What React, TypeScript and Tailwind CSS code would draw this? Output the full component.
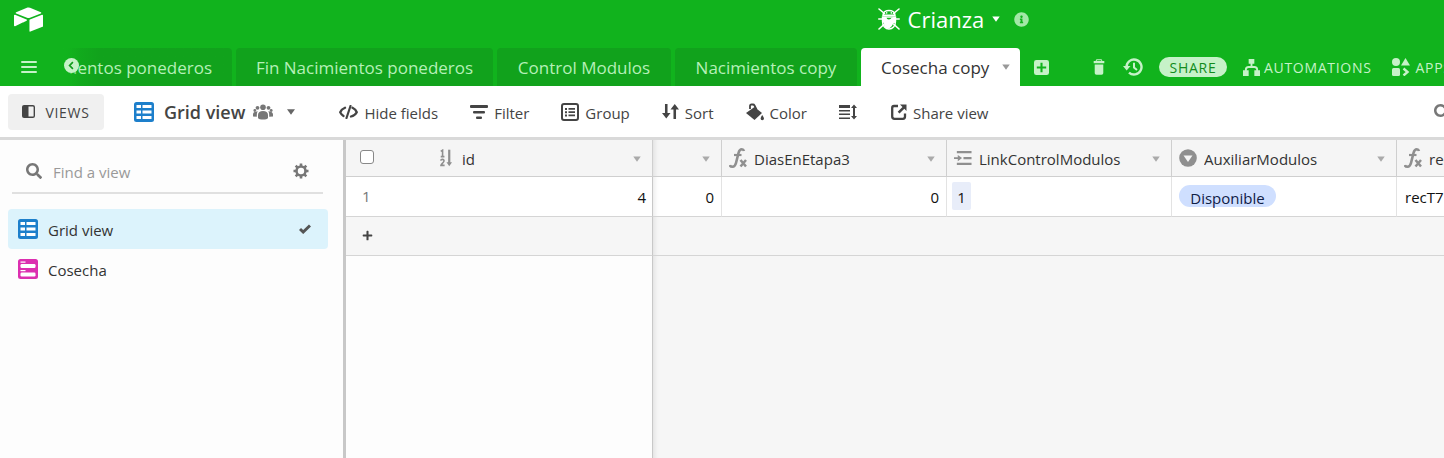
import React from 'react';
import { SiAirtable } from 'react-icons/si';
import { FaInfoCircle, FaPlus, FaSearch } from 'react-icons/fa';

interface IIconProps {
  className?: string;
}

interface ITabProps {
  label: string;
  width: string;
}

interface IColumnHeadProps {
  label?: string;
  icon?: React.ReactNode;
  className?: string;
}

interface IToolProps {
  label?: string;
  title?: string;
  icon: React.ReactNode;
  className?: string;
}

function Caret({ className }: IIconProps) {
  return (
    <svg viewBox="0 0 10 8" className={className} fill="currentColor" aria-hidden="true">
      <path d="M0 0.5h10L5 7.5z" />
    </svg>
  );
}

function BugIcon({ className }: IIconProps) {
  return (
    <svg viewBox="0 0 22 22" className={className} fill="none" stroke="currentColor" strokeWidth="1.6" strokeLinecap="round" aria-hidden="true">
      <path d="M1 1l5.500 4.500M21 1l-5.500 4.500M0.800 11h4M21.200 11h-4M1 21l5.500-5M21 21l-5.500-5" />
      <path d="M5 7.200C5 0.800 17 0.800 17 7.200z" strokeWidth="1.500" />
      <path d="M8.700 4.800v0.100M13.300 4.800v0.100" strokeWidth="1.500" />
      <path d="M4.500 9h13v4.500c0 4.500-3 7.500-6.500 7.500s-6.500-3-6.500-7.500z" strokeWidth="1.400" />
      <path d="M4.500 9h4c0 2.500 2.500 3 4 2 1-1.500 2-2 5-2v4.500c0 1-0.500 1.500-1.500 1.500-1 0-1 1-1.500 2-0.800 1.500-2 2.500-3.500 3.500-2.500 0-4-1-5-2.500 1-2 0-3-1.500-4z" fill="currentColor" stroke="none" />
    </svg>
  );
}

function GridIcon({ className }: IIconProps) {
  return (
    <svg viewBox="0 0 20 20" className={className} aria-hidden="true">
      <rect width="20" height="20" rx="2.500" fill="currentColor" />
      <path fill="#fff" d="M2.500 3h4.500v3h-4.500zM8.500 3h9v3h-9zM2.500 8.500h4.500v3h-4.500zM8.500 8.500h9v3h-9zM2.500 14h4.500v3h-4.500zM8.500 14h9v3h-9z" />
    </svg>
  );
}

function FormIcon({ className }: IIconProps) {
  return (
    <svg viewBox="0 0 20 20" className={className} aria-hidden="true">
      <rect width="20" height="20" rx="2.500" fill="currentColor" />
      <g fill="#fff">
        <rect x="2.500" y="2.500" width="5" height="1.200" />
        <rect x="2.500" y="5" width="15" height="4" rx="1.200" />
        <rect x="2.500" y="11" width="5" height="1.200" />
        <rect x="2.500" y="13.500" width="15" height="4" rx="1.200" />
      </g>
    </svg>
  );
}

function PeopleIcon({ className }: IIconProps) {
  return (
    <svg viewBox="0 0 20 16" className={className} fill="currentColor" aria-hidden="true">
      <circle cx="10" cy="3.200" r="2.800" />
      <circle cx="4.500" cy="3.800" r="1.900" />
      <circle cx="15.500" cy="3.800" r="1.900" />
      <circle cx="1.800" cy="6.500" r="1.400" />
      <circle cx="18.200" cy="6.500" r="1.400" />
      <path d="M5 14v-3c0-2.500 2-4 5-4s5 1.500 5 4v3c-1 2-9 2-10 0z" />
      <path d="M0 12.500V10.500C0 8.500 1.500 7.500 4.800 7.200 3.800 8.500 3.800 10 3.800 12.800zM20 12.500V10.500C20 8.500 18.500 7.500 15.200 7.200 16.200 8.500 16.200 10 16.200 12.800z" />
    </svg>
  );
}

function CodeIcon({ className }: IIconProps) {
  return (
    <svg viewBox="0 0 19 14" className={className} fill="none" stroke="currentColor" strokeLinecap="round" strokeLinejoin="round" aria-hidden="true">
      <path d="M6 2.800Q2.500 4.300 1.200 7.200 2.500 9.800 4.500 11M13.500 2.800Q16.500 4.300 17.800 7.200 16 10.500 12 11.500" strokeWidth="2.300" />
      <path d="M11.500 1L7.500 13" strokeWidth="2.200" />
    </svg>
  );
}

function HistoryIcon({ className }: IIconProps) {
  return (
    <svg viewBox="0 0 20 18" className={className} fill="none" stroke="currentColor" aria-hidden="true">
      <path d="M3.500 9a7.500 7.500 0 1 1 2.500 5.600" strokeWidth="2.400" />
      <path d="M0 8h7.500L3.700 12.500z" fill="currentColor" stroke="none" />
      <path d="M11 4.800v4.700l3 2.500" strokeWidth="2" />
    </svg>
  );
}

function GearIcon({ className }: IIconProps) {
  return (
    <svg viewBox="0 0 16 16" className={className} fill="none" stroke="currentColor" aria-hidden="true">
      <circle cx="8" cy="8" r="4.500" strokeWidth="2.600" />
      <path
        d="M8 0.500v3M8 12.500v3M0.500 8h3M12.500 8h3M2.700 2.700l2.100 2.100M11.200 11.200l2.100 2.100M2.700 13.300l2.100-2.100M11.200 4.800l2.100-2.100"
        strokeWidth="2.600"
      />
    </svg>
  );
}

function CheckIcon({ className }: IIconProps) {
  return (
    <svg viewBox="0 0 12 10" className={className} fill="none" stroke="currentColor" strokeWidth="3" aria-hidden="true">
      <path d="M1 5l3.200 3L11 1.500" />
    </svg>
  );
}

function SidebarIcon({ className }: IIconProps) {
  return (
    <svg viewBox="0 0 14 14" className={className} aria-hidden="true">
      <rect x="0.750" y="0.750" width="12.500" height="12.500" rx="1.500" fill="none" stroke="currentColor" strokeWidth="1.500" />
      <path d="M1 1h6v12H1z" fill="currentColor" />
    </svg>
  );
}

function MenuIcon({ className }: IIconProps) {
  return (
    <svg viewBox="0 0 16 14" className={className} fill="currentColor" aria-hidden="true">
      <rect y="1" width="16" height="2" rx="1" />
      <rect y="6" width="16" height="2" rx="1" />
      <rect y="11" width="16" height="2" rx="1" />
    </svg>
  );
}

function TrashIcon({ className }: IIconProps) {
  return (
    <svg viewBox="0 0 14 18" className={className} fill="currentColor" aria-hidden="true">
      <path d="M4 0h6l1 2h2.200v2.500H0.800V2H3zM4.600 1.200L4.200 2h5.600l-0.400-0.800z" fillRule="evenodd" />
      <path d="M2 6h10v10a2 2 0 0 1-2 2H4a2 2 0 0 1-2-2z" />
    </svg>
  );
}

function AddTableIcon({ className }: IIconProps) {
  return (
    <svg viewBox="0 0 16 16" className={className} aria-hidden="true">
      <rect width="16" height="16" rx="2.500" fill="currentColor" />
      <path d="M8 3v10M3 8h10" stroke="#11b31d" strokeWidth="2.200" />
    </svg>
  );
}

function BackIcon({ className }: IIconProps) {
  return (
    <svg viewBox="0 0 16 16" className={className} aria-hidden="true">
      <circle cx="8" cy="8" r="8" fill="currentColor" />
      <path d="M9.500 4.500L6 8l3.500 3.500" stroke="#119c1c" strokeWidth="1.800" fill="none" />
    </svg>
  );
}

function AutomationsIcon({ className }: IIconProps) {
  return (
    <svg viewBox="0 0 18 18" className={className} fill="currentColor" aria-hidden="true">
      <path d="M6 0h6v5H6zM0 12h6v6H0zM12 12h6v6h-6z" />
      <path d="M9 4v4.500M3 13v-1.500q0-3 3-3h6q3 0 3 3V13" fill="none" stroke="currentColor" strokeWidth="2" />
    </svg>
  );
}

function AppsIcon({ className }: IIconProps) {
  return (
    <svg viewBox="0 0 18 18" className={className} fill="currentColor" aria-hidden="true">
      <circle cx="4" cy="4" r="4" />
      <path d="M13.500 0L18 7.500H9z" />
      <rect y="10" width="8" height="8" rx="1.500" />
      <path d="M11.500 10.500L15.500 14l-4 3.500" fill="none" stroke="currentColor" strokeWidth="2.400" />
    </svg>
  );
}

function FilterIcon({ className }: IIconProps) {
  return (
    <svg viewBox="0 0 18 14" className={className} fill="currentColor" aria-hidden="true">
      <rect y="0" width="18" height="3" rx="1" />
      <rect x="3" y="6" width="12" height="2.500" rx="1" />
      <rect x="6" y="11.500" width="6" height="2.500" rx="1" />
    </svg>
  );
}

function GroupIcon({ className }: IIconProps) {
  return (
    <svg viewBox="0 0 18 18" className={className} fill="currentColor" aria-hidden="true">
      <rect x="1" y="1" width="16" height="16" rx="2" fill="none" stroke="currentColor" strokeWidth="2" />
      <path d="M4 5h2v2H4zM7.500 5H14v1.700H7.500zM4 8.200h2v2H4zM7.500 8.300H14V10H7.500zM4 11.500h2v2H4zM7.500 11.600H14v1.700H7.500z" />
    </svg>
  );
}

function SortIcon({ className }: IIconProps) {
  return (
    <svg viewBox="0 0 16 16" className={className} fill="currentColor" aria-hidden="true">
      <path d="M2.800 1h2.400v8.500H8L4 14.500 0 9.500h2.800zM10.800 15h2.400V6H16L12 1 8 6h2.800z" />
    </svg>
  );
}

function PaintIcon({ className }: IIconProps) {
  return (
    <svg viewBox="0 0 18 17" className={className} fill="currentColor" aria-hidden="true">
      <path d="M8.500 3.500l7.500 6L8.500 16.500 0 9.500z" />
      <path d="M4 5.500V2.500Q4 1 5.500 1h1.500q1 0 1.500 1l2 4" fill="none" stroke="currentColor" strokeWidth="1.800" />
      <path d="M16.200 11.500c1 1.600 1.800 2.800 1.800 3.600a1.700 1.700 0 0 1-3.400 0c0-0.800 0.700-2 1.600-3.600z" />
    </svg>
  );
}

function RowHeightIcon({ className }: IIconProps) {
  return (
    <svg viewBox="0 0 18 16" className={className} fill="currentColor" aria-hidden="true">
      <path d="M0 1h11v3H0zM0 6h11v1.500H0zM0 9.500h11V11H0zM0 13.500h11V15H0z" />
      <path d="M15 0.500l3 3.500h-2v8h2l-3 3.500-3-3.500h2V4h-2z" />
    </svg>
  );
}

function ShareIcon({ className }: IIconProps) {
  return (
    <svg viewBox="0 0 16 16" className={className} aria-hidden="true">
      <path d="M7 2H3Q1.200 2 1.200 4v8.500Q1.200 14.800 3.500 14.800h8.500Q14 14.800 14 12.500V9.500" fill="none" stroke="currentColor" strokeWidth="2.300" />
      <path d="M9 0.500h6.500V7l-2.200-2.200-4.800 4.800-1.800-1.800 4.800-4.800z" fill="currentColor" />
    </svg>
  );
}

function AutoNumberIcon({ className }: IIconProps) {
  return (
    <svg viewBox="0 0 13 19" className={className} fill="none" stroke="currentColor" aria-hidden="true">
      <path d="M0.800 2.300L2.800 1v7.300M0.800 8h4" strokeWidth="1.700" />
      <path d="M0.800 12.300C1.200 10.500 4.600 10.500 4.300 12.800 4.200 14.500 1 16 1 17.500h4" strokeWidth="1.700" />
      <path d="M10 0.500v15" strokeWidth="2.400" />
      <path d="M7 14h6l-3 4.500z" fill="currentColor" stroke="none" />
    </svg>
  );
}

function FormulaIcon({ className }: IIconProps) {
  return (
    <svg viewBox="0 0 18 20" className={className} fill="none" stroke="currentColor" aria-hidden="true">
      <path d="M15 3Q14.500 1.300 12.800 1.300 10.500 1.300 9.500 5L7 15Q6 18.700 3.500 18.700 1.200 18.700 0.800 17" strokeWidth="2.600" />
      <path d="M5 7h7.500" strokeWidth="2.200" />
      <path d="M11.500 12l5.500 6.500M17 12l-5.500 6.500" strokeWidth="2.500" />
    </svg>
  );
}

function CountIcon({ className }: IIconProps) {
  return (
    <svg viewBox="0 0 19 16" className={className} fill="currentColor" aria-hidden="true">
      <path d="M3 0.500h15.500v2.500H3zM10 7h8.500v2.200H10zM3 13h15.500v2.500H3zM0 7.200h4V4.800L8.500 8 4 11.300V9H0z" />
    </svg>
  );
}

function SelectIcon({ className }: IIconProps) {
  return (
    <svg viewBox="0 0 18 18" className={className} aria-hidden="true">
      <circle cx="9" cy="9" r="8.800" fill="currentColor" />
      <path d="M4.500 6.500h9L9 13z" fill="#f5f5f5" />
    </svg>
  );
}

function Tab({ label, width }: ITabProps) {
  return (
    <button className={`h-full shrink-0 whitespace-nowrap rounded-t-sm bg-[#11a21c] pt-0.5 text-[17px] text-[#b5f0b8] ${width}`}>
      {label}
    </button>
  );
}

function Tool({ label, title, icon, className }: IToolProps) {
  return (
    <button aria-label={label || title} className={`flex shrink-0 items-center gap-1.5 whitespace-nowrap ${className}`}>
      {icon}
      {label && <span className="pt-1">{label}</span>}
    </button>
  );
}

function ColumnHead({ label, icon, className }: IColumnHeadProps) {
  return (
    <th className={`border-r border-b border-[#cfcfcf] bg-[#f5f5f5] p-0 font-normal ${className}`}>
      <div className="flex items-center pr-2.5 pl-1.5">
        <span className="flex w-5 shrink-0 justify-center text-[#8f8f8f]">{icon}</span>
        <span className="ml-1.5 flex-1 truncate pt-0.5 text-left">{label}</span>
        <Caret className="mt-0.5 h-1.5 w-2.5 text-[#aaaaaa]" />
      </div>
    </th>
  );
}

function Header() {
  return (
    <header className="bg-[#11b31d] text-[#c6f2c8]">
      <div className="flex h-12 items-center px-3.5 pb-2.5">
        <a href="#home" aria-label="Home" className="flex-2">
          <SiAirtable className="size-[29px] text-white" />
        </a>
        <button className="ml-8 flex items-center text-[22px] text-white">
          <BugIcon className="mr-2 size-[22px]" />
          Crianza
          <Caret className="ml-2 h-1.5 w-2" />
        </button>
        <div className="flex flex-1 items-center pl-3.5">
          <button aria-label="Base info">
            <FaInfoCircle className="size-[15px] text-[#a3e8a7]" />
          </button>
        </div>
      </div>
      <div className="flex h-[38px] items-center overflow-hidden">
        <button aria-label="Menu" className="w-14 shrink-0 pl-[21px]">
          <MenuIcon className="h-3.5 w-4" />
        </button>
        <nav className="flex h-full shrink-0 gap-1">
          <div className="relative flex h-full w-44 justify-end overflow-hidden rounded-t-sm bg-linear-to-r from-[#11b31d] to-[#11a21c] to-25%">
            <button className="whitespace-nowrap pt-0.5 pr-5 text-[17px] text-[#b5f0b8]">Nacimientos ponederos</button>
            <span className="absolute inset-y-0 left-0 w-6 bg-linear-to-r from-[#11b31d] from-40% to-transparent" />
            <button aria-label="Previous tables" className="absolute top-2.5 left-2">
              <BackIcon className="size-[15px] text-[#c6f2c8]" />
            </button>
          </div>
          <Tab label="Fin Nacimientos ponederos" width="w-[257px]" />
          <Tab label="Control Modulos" width="w-[174px]" />
          <Tab label="Nacimientos copy" width="w-[182px]" />
          <button className="flex h-full w-[159px] items-center justify-between rounded-t-sm bg-white pr-2.5 pl-5 text-[17px] whitespace-nowrap text-[#333333]">
            <span className="pt-0.5">Cosecha copy</span>
            <Caret className="h-1.5 w-2 text-[#999999]" />
          </button>
        </nav>
        <button aria-label="Add table" className="ml-3.5 shrink-0">
          <AddTableIcon className="size-[15px]" />
        </button>
        <div className="ml-11 flex shrink-0 items-center whitespace-nowrap text-sm tracking-wider">
          <button aria-label="Trash">
            <TrashIcon className="h-[18px] w-3" />
          </button>
          <button aria-label="History" className="ml-[18px]">
            <HistoryIcon className="h-[18px] w-5" />
          </button>
          <button className="ml-4 h-5 w-[68px] rounded-full bg-[#c6f2c8] pt-px leading-5 text-[#128c1d]">SHARE</button>
          <button className="ml-4 flex items-center gap-1">
            <AutomationsIcon className="size-[17px]" />
            <span className="pt-0.5">AUTOMATIONS</span>
          </button>
          <button className="ml-5 flex items-center gap-1.5">
            <AppsIcon className="size-[18px]" />
            <span className="pt-0.5">APPS</span>
          </button>
        </div>
      </div>
    </header>
  );
}

function Toolbar() {
  return (
    <div className="flex h-[54px] items-center overflow-hidden border-b-3 border-[#d9d9d9] bg-white pl-2 text-[15px] text-[#444444]">
      <button className="flex h-9 w-24 shrink-0 items-center justify-center gap-2.5 rounded-sm bg-[#f0f0f0] text-sm tracking-wider">
        <SidebarIcon className="size-[13px]" />
        <span className="pt-0.5">VIEWS</span>
      </button>
      <button className="ml-[30px] flex shrink-0 items-center whitespace-nowrap text-[18px] font-semibold">
        <GridIcon className="mr-2.5 size-5 text-[#1d7fcb]" />
        <span className="pt-0.5">Grid view</span>
        <PeopleIcon className="ml-2 h-4 w-5 text-[#777777]" />
        <Caret className="ml-3.5 h-2 w-2 text-[#666666]" />
      </button>
      <Tool label="Hide fields" icon={<CodeIcon className="h-3.5 w-[19px]" />} className="ml-11" />
      <Tool label="Filter" icon={<FilterIcon className="h-3.5 w-[18px]" />} className="ml-8" />
      <Tool label="Group" icon={<GroupIcon className="size-[18px]" />} className="ml-8" />
      <Tool label="Sort" icon={<SortIcon className="size-[17px]" />} className="ml-8" />
      <Tool label="Color" icon={<PaintIcon className="size-[18px]" />} className="ml-8" />
      <Tool title="Row height" icon={<RowHeightIcon className="h-4 w-[18px]" />} className="ml-8" />
      <Tool label="Share view" icon={<ShareIcon className="size-4" />} className="ml-[34px]" />
      <button aria-label="Search" className="mr-[-6px] ml-auto shrink-0">
        <FaSearch className="size-4 text-[#777777]" />
      </button>
    </div>
  );
}

function Sidebar() {
  return (
    <aside className="w-[346px] shrink-0 border-r-3 border-[#c8c8c8] bg-[#fdfdfd] text-[15px] text-[#333333]">
      <div className="mr-5 ml-3 flex h-[54px] items-center border-b-2 border-[#e0e0e0] pt-2.5 pr-3.5 pl-3.5">
        <FaSearch className="size-4 text-[#777777]" />
        <input
          type="text"
          aria-label="Find a view"
          placeholder="Find a view"
          className="ml-[11px] w-0 flex-1 bg-transparent pt-0.5 outline-none placeholder:text-[#999999]"
        />
        <button aria-label="View settings">
          <GearIcon className="size-4 text-[#777777]" />
        </button>
      </div>
      <ul className="mt-[15px] mr-[15px] ml-2">
        <li>
          <button className="flex h-10 w-full items-center gap-2.5 rounded-sm bg-[#dcf3fc] pr-[17px] pl-2.5">
            <GridIcon className="size-5 text-[#1d7fcb]" />
            <span className="flex-1 pt-0.5 text-left">Grid view</span>
            <CheckIcon className="h-2.5 w-3 text-[#555555]" />
          </button>
        </li>
        <li>
          <button className="flex h-10 w-full items-center gap-2.5 pr-4 pl-2.5">
            <FormIcon className="size-5 text-[#dc2fb0]" />
            <span className="flex-1 pt-0.5 text-left">Cosecha</span>
          </button>
        </li>
      </ul>
    </aside>
  );
}

function Grid() {
  const shadow = 'shadow-[inset_6px_0_4px_-4px_rgba(0,0,0,0.08)]';

  return (
    <main className="flex min-w-0 flex-1 flex-col overflow-hidden text-[15px] text-[#333333]">
      <table className="w-[1207px] table-fixed border-separate border-spacing-0">
        <colgroup>
          <col className="w-[84px]" />
          <col className="w-[223px]" />
          <col className="w-[69px]" />
          <col className="w-[225px]" />
          <col className="w-[225px]" />
          <col className="w-[225px]" />
          <col className="w-[156px]" />
        </colgroup>
        <thead>
          <tr className="h-[37px]">
            <th className="border-b border-[#cfcfcf] bg-[#f5f5f5] p-0 pb-0.5 pl-3.5 text-left">
              <input
                type="checkbox"
                aria-label="Select all rows"
                className="block size-3.5 appearance-none rounded-[3px] border border-[#888888] bg-white"
              />
            </th>
            <ColumnHead label="id" icon={<AutoNumberIcon className="h-[18px] w-3" />} />
            <ColumnHead className={shadow} />
            <ColumnHead label="DiasEnEtapa3" icon={<FormulaIcon className="h-5 w-[18px]" />} />
            <ColumnHead label="LinkControlModulos" icon={<CountIcon className="h-4 w-[18px]" />} />
            <ColumnHead label="AuxiliarModulos" icon={<SelectIcon className="size-[18px]" />} />
            <ColumnHead label="recordId" icon={<FormulaIcon className="h-5 w-[18px]" />} />
          </tr>
        </thead>
        <tbody>
          <tr className="h-10 bg-white text-[#111111]">
            <td className="border-b border-[#d5d5d5] p-0 pl-4 text-[#777777]">1</td>
            <td className="border-r border-b border-[#c8c8c8] border-b-[#d5d5d5] p-0 pt-0.5 pr-1.5 text-right">4</td>
            <td className={`border-r border-b border-[#e3e3e3] border-b-[#d5d5d5] p-0 pt-0.5 pr-[7px] text-right ${shadow}`}>0</td>
            <td className="border-r border-b border-[#e3e3e3] border-b-[#d5d5d5] p-0 pt-0.5 pr-[7px] text-right">0</td>
            <td className="border-r border-b border-[#e3e3e3] border-b-[#d5d5d5] p-0 pb-0.5 pl-[5px]">
              <span className="block h-7 w-[19px] rounded-xs bg-[#e8edf9] pt-px text-center leading-7">1</span>
            </td>
            <td className="border-r border-b border-[#e3e3e3] border-b-[#d5d5d5] p-0 pb-0.5 pl-[7px]">
              <span className="block h-[22px] w-[97px] rounded-full bg-[#cfdfff] pt-0.5 text-center leading-[22px] text-[#102046]">
                Disponible
              </span>
            </td>
            <td className="border-b border-[#d5d5d5] p-0 pt-0.5 pl-2">recT7</td>
          </tr>
          <tr className="h-[39px] bg-[#f6f6f6]">
            <td className="border-b border-[#d5d5d5] p-0 pb-0.5 pl-4">
              <button aria-label="Add row" className="block">
                <FaPlus className="size-[11px] text-[#444444]" />
              </button>
            </td>
            <td className="border-r border-b border-[#c8c8c8] border-b-[#d5d5d5] p-0"></td>
            <td className={`border-b border-[#d5d5d5] p-0 ${shadow}`}></td>
            <td colSpan={4} className="border-b border-[#d5d5d5] p-0"></td>
          </tr>
        </tbody>
      </table>
      <div className="flex flex-1">
        <div className="w-[307px] shrink-0 border-r border-[#c8c8c8] bg-[#fdfdfd]" />
        <div className={`flex-1 bg-[#f6f6f6] ${shadow}`} />
      </div>
    </main>
  );
}

export default function App() {
  return (
    <div className="flex min-h-screen flex-col overflow-hidden font-['Open_Sans','Noto_Sans',sans-serif]">
      <Header />
      <Toolbar />
      <div className="flex flex-1">
        <Sidebar />
        <Grid />
      </div>
    </div>
  );
}
